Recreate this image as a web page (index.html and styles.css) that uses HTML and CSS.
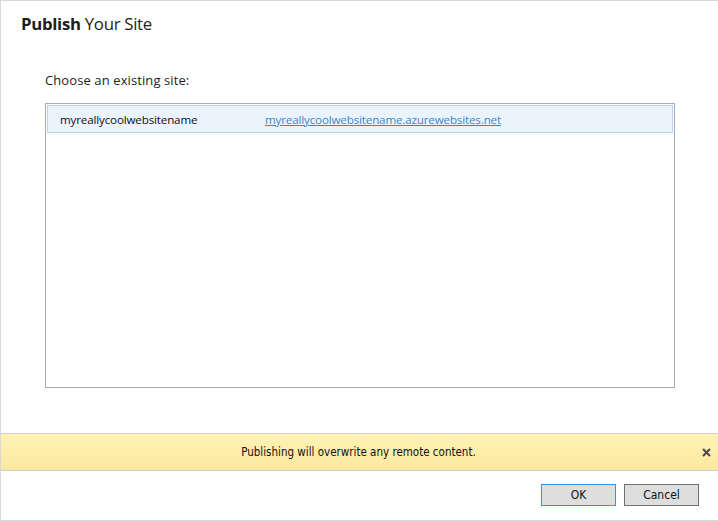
FILE: index.html
```html
<!DOCTYPE html>
<html>
<head>
<meta charset="utf-8">
<link rel="stylesheet" href="styles.css">
</head>
<body>
<div class="dialog">
  <div class="main">
    <h1 class="title"><b>Publish</b> Your Site</h1>
    <div class="label">Choose an existing site:</div>
    <div class="list">
      <div class="row selected">
        <span class="name">myreallycoolwebsitename</span>
        <a class="url" href="#">myreallycoolwebsitename.azurewebsites.net</a>
      </div>
    </div>
  </div>
  <div class="notice">
    <span class="notice-text">Publishing will overwrite any remote content.</span>
    <span class="close">
      <svg width="9" height="9" viewBox="0 0 9 9"><path d="M1 1 L8 8 M8 1 L1 8" stroke="#4a4a4a" stroke-width="2"/></svg>
    </span>
  </div>
  <div class="footer">
    <button class="btn default">OK</button>
    <button class="btn">Cancel</button>
  </div>
</div>
</body>
</html>
```

FILE: styles.css
```css
html, body {
  margin: 0;
  padding: 0;
  background: #fff;
}
body {
  font-family: "Segoe UI", "Open Sans", "Noto Sans", sans-serif;
  color: #1e1e1e;
}
.dialog {
  width: 717px;
  height: 519px;
  border-left: 1px solid #d8d8d8;
  border-top: 1px solid #d8d8d8;
  border-bottom: 1px solid #d8d8d8;
  display: flex;
  flex-direction: column;
  overflow: hidden;
}
.main {
  flex: 1;
  padding: 12px 0 0 20px;
}
.title {
  margin: 0;
  font-size: 16.8px;
  font-weight: normal;
  line-height: 22px;
  letter-spacing: -0.3px;
}
.title b {
  font-weight: 700;
}
.label {
  margin: 37px 0 0 24px;
  font-size: 13px;
  line-height: 17px;
  letter-spacing: 0.1px;
}
.list {
  margin: 14px 0 0 24px;
  width: 626px;
  height: 281px;
  border: 1px solid #a9a9a9;
  padding: 1px;
}
.row {
  height: 26px;
  display: flex;
  align-items: center;
  padding-left: 12px;
  font-size: 11.6px;
  letter-spacing: -0.15px;
}
.row.selected {
  background: #ebf3fd;
  border: 1px solid #b8d1ee;
}
.name {
  width: 205px;
  color: #111;
}
.url {
  color: #3d86c6;
  text-decoration: underline;
}
.notice {
  height: 36px;
  border-top: 1px solid #cfcfcf;
  border-bottom: 1px solid #cfcfcf;
  background: linear-gradient(#fef2b5, #fce99d);
  display: flex;
  align-items: center;
  justify-content: center;
  position: relative;
  font-family: "DejaVu Sans Condensed", "DejaVu Sans", sans-serif;
  font-size: 11.5px;
  color: #111;
  margin-bottom: 13px;
}
.notice-text {
  margin-left: -2px;
}
.close {
  position: absolute;
  right: 7px;
  top: 14px;
  line-height: 0;
}
.footer {
  display: flex;
  justify-content: flex-end;
  gap: 8px;
  padding-right: 19px;
  height: 36px;
}
.btn {
  width: 75px;
  height: 22px;
  background: #dedede;
  border: 1px solid #707070;
  font-family: "DejaVu Sans Condensed", "DejaVu Sans", sans-serif;
  font-size: 12px;
  color: #111;
  padding: 0;
  margin: 0;
}
.btn.default {
  border-color: #3c8fe6;
}
```
